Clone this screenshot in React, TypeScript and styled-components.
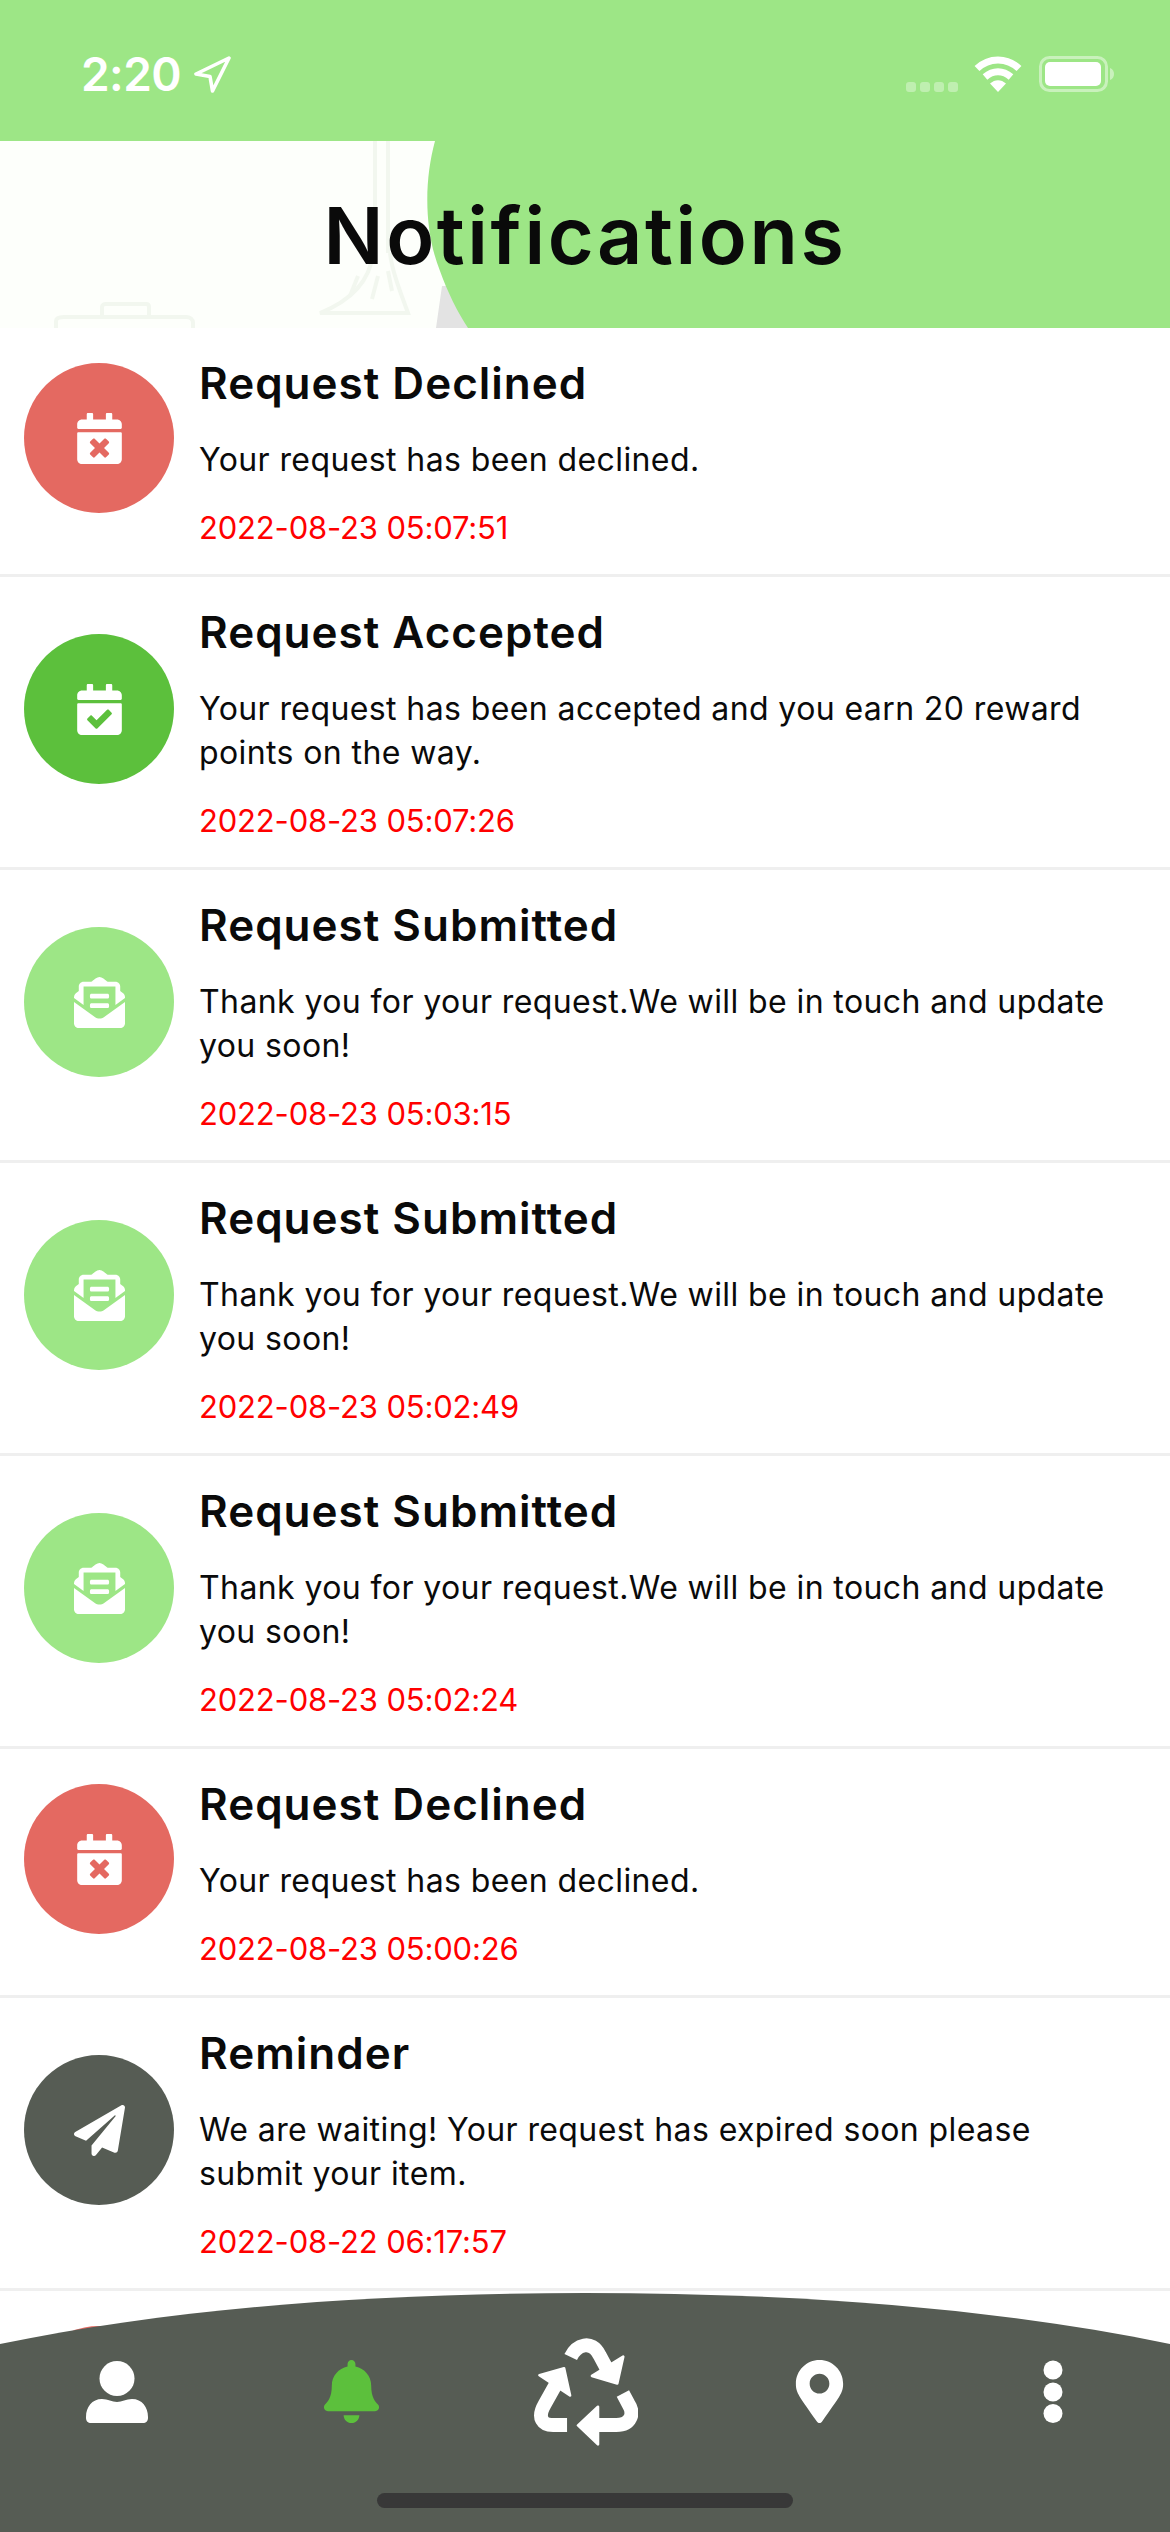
import React from "react";
import styled, { createGlobalStyle } from "styled-components";
import { FaCalendarCheck, FaCalendarTimes, FaEnvelopeOpenText, FaPaperPlane, FaBell, FaMapMarkerAlt } from "react-icons/fa";

const Global = createGlobalStyle`
  html, body { margin: 0; padding: 0; background: #fff; }
  * { box-sizing: border-box; }
`;

const GREEN = "#9de686";
const DARK = "#565c54";

const Page = styled.div`
  position: relative;
  width: 1170px;
  height: 2532px;
  overflow: hidden;
  background: #fff;
  font-family: Inter, "Noto Sans", sans-serif;
  color: #0a0a0a;
`;

const StatusBar = styled.div`
  height: 141px;
  background: ${GREEN};
  display: flex;
  justify-content: space-between;
  align-items: flex-start;
  padding: 56px 55px 0 81px;
`;
const TimeGroup = styled.div`
  display: flex;
  align-items: flex-start;
  gap: 13px;
`;
const Time = styled.span`
  font-size: 46px;
  line-height: 37px;
  font-weight: 600;
  color: #fff;
  letter-spacing: -0.6px;
`;
const StatusIcons = styled.div`
  display: flex;
  align-items: flex-start;
  gap: 16px;
`;

const Header = styled.header`
  position: relative;
  height: 187px;
  background: #fdfffb;
  display: flex;
  align-items: center;
  justify-content: center;
`;
const HeaderArt = styled.svg`
  position: absolute;
  inset: 0;
  width: 100%;
  height: 100%;
`;
const Title = styled.h1`
  position: relative;
  margin: 0;
  font-size: 79px;
  line-height: 96px;
  font-weight: 600;
  letter-spacing: 2.6px;
`;

const List = styled.div`
  display: flex;
  flex-direction: column;
`;
const Row = styled.article`
  display: flex;
  align-items: center;
  gap: 25px;
  padding: 22px 0 24px 24px;
  border-bottom: 3px solid #efefef;
`;
const Badge = styled.div<{ $bg: string }>`
  flex: none;
  width: 150px;
  height: 150px;
  margin-bottom: 24px;
  border-radius: 50%;
  background: ${(p) => p.$bg};
  color: #fff;
  display: flex;
  align-items: center;
  justify-content: center;
`;
const Content = styled.div`
  width: 930px;
`;
const ItemTitle = styled.h2`
  margin: 0;
  font-size: 44px;
  line-height: 66px;
  font-weight: 600;
  letter-spacing: 1px;
`;
const Body = styled.p`
  margin: 22px 0 0;
  font-size: 32px;
  line-height: 44px;
  font-weight: 400;
  letter-spacing: 0.4px;
`;
const Stamp = styled.div`
  margin-top: 24px;
  font-size: 31px;
  line-height: 44px;
  color: #ff0000;
  letter-spacing: -0.17px;
`;

const Nav = styled.nav`
  position: absolute;
  left: 0;
  right: 0;
  bottom: 0;
  height: 239px;
  background: ${DARK};
  clip-path: path("M0 51 C180 14 380 0 585 0 C790 0 990 14 1170 51 L1170 239 L0 239 Z");
  padding-top: 44px;
  display: flex;
  flex-direction: column;
  align-items: center;
`;
const NavIcons = styled.div`
  width: 100%;
  height: 109px;
  display: grid;
  grid-template-columns: repeat(5, 1fr);
`;
const NavItem = styled.div<{ $color?: string }>`
  display: flex;
  align-items: center;
  justify-content: center;
  color: ${(p) => p.$color || "#fff"};
`;
const HomeBar = styled.div`
  margin-top: 47px;
  width: 416px;
  height: 15px;
  border-radius: 8px;
  background: #383838;
`;

const Recycle = () => (
  <svg width="105" height="109" viewBox="155 80 315 328">
    <g fill="none" stroke="#fff" strokeWidth="42" strokeLinejoin="round">
      <path d="M268 140 C285 105 330 85 355 135 L378 178" />
      <path d="M222 225 L190 282 C165 325 185 345 215 345 L257 345" />
      <path d="M345 345 L405 345 C450 345 460 310 442 282 L425 250" />
    </g>
    <g fill="#fff" stroke="#fff" strokeWidth="8" strokeLinejoin="round">
      <path d="M426 139 L408 220 L332 197 Z" />
      <path d="M174 195 L248 174 L266 256 Z" />
      <path d="M350 290 L290 346 L350 403 Z" />
    </g>
  </svg>
);

const Person = () => (
  <svg width="62" height="62" viewBox="0 0 62 62" fill="#fff">
    <circle cx="31" cy="17.5" r="17.5" />
    <path d="M0 56 C0 46 6 38 16 38 C22 38 26 41 31 41 C36 41 40 38 46 38 C56 38 62 46 62 56 V57 C62 60 60 62 57 62 H5 C2 62 0 60 0 57 Z" />
  </svg>
);

type Item = { kind: "no" | "yes" | "sent" | "remind"; title: string; body: string; stamp: string };
const decl = "Your request has been declined.";
const thanks = "Thank you for your request.We will be in touch and update you soon!";
const items: Item[] = [
  { kind: "no", title: "Request Declined", body: decl, stamp: "2022-08-23 05:07:51" },
  { kind: "yes", title: "Request Accepted", body: "Your request has been accepted and you earn 20 reward points on the way.", stamp: "2022-08-23 05:07:26" },
  { kind: "sent", title: "Request Submitted", body: thanks, stamp: "2022-08-23 05:03:15" },
  { kind: "sent", title: "Request Submitted", body: thanks, stamp: "2022-08-23 05:02:49" },
  { kind: "sent", title: "Request Submitted", body: thanks, stamp: "2022-08-23 05:02:24" },
  { kind: "no", title: "Request Declined", body: decl, stamp: "2022-08-23 05:00:26" },
  { kind: "remind", title: "Reminder", body: "We are waiting! Your request has expired soon please submit your item.", stamp: "2022-08-22 06:17:57" },
  { kind: "no", title: "Request Declined", body: decl, stamp: "2022-08-22 06:10:12" },
];
const looks = {
  no: { bg: "#e46961", icon: <FaCalendarTimes size={51} /> },
  yes: { bg: "#5cc03c", icon: <FaCalendarCheck size={51} /> },
  sent: { bg: GREEN, icon: <FaEnvelopeOpenText size={51} /> },
  remind: { bg: DARK, icon: <FaPaperPlane size={51} /> },
};

export default function App() {
  return (
    <Page>
      <Global />
      <StatusBar>
        <TimeGroup>
          <Time>2:20</Time>
          <svg width="37" height="37" viewBox="0 0 37 37" fill="none">
            <path d="M35 2 L2 18 L16 20.5 L18.5 35 Z" stroke="#fff" strokeWidth="3.6" strokeLinejoin="round" />
          </svg>
        </TimeGroup>
        <StatusIcons>
          <svg width="52" height="36" viewBox="0 0 52 36" fill="#fff" fillOpacity="0.35">
            <rect x="0" y="26" width="10" height="10" rx="3" />
            <rect x="14" y="26" width="10" height="10" rx="3" />
            <rect x="28" y="26" width="10" height="10" rx="3" />
            <rect x="42" y="26" width="10" height="10" rx="3" />
          </svg>
          <svg width="48" height="36" viewBox="0 0 48 36">
            <g fill="none" stroke="#fff" strokeWidth="7">
              <path d="M3 12.5 C15 1 33 1 45 12.5" />
              <path d="M11 21 C19 14 29 14 37 21" />
            </g>
            <path d="M16 27.5 C21 23 27 23 32 27.5 L24 36 Z" fill="#fff" />
          </svg>
          <svg width="76" height="36" viewBox="0 0 76 36" style={{ marginLeft: 1 }}>
            <rect x="1.5" y="1.5" width="66" height="33" rx="9" fill="none" stroke="#fff" strokeOpacity="0.45" strokeWidth="3" />
            <rect x="6" y="6" width="56" height="24" rx="5" fill="#fff" />
            <path d="M71 12 C74 13 75 15.5 75 18 C75 20.5 74 23 71 24 Z" fill="#fff" fillOpacity="0.45" />
          </svg>
        </StatusIcons>
      </StatusBar>

      <Header>
        <HeaderArt viewBox="0 0 1170 187">
          <g fill="none" stroke="#f2f7ef" strokeWidth="4">
            <path d="M375 0 V112 M388 0 V112" />
            <path d="M373 112 C370 140 350 160 320 172 H408 C400 150 392 130 390 112" />
            <path d="M350 155 L358 135 M372 158 L378 135 M392 150 L388 130" />
            <path d="M56 187 V180 C56 177 60 176 64 176 H186 C190 176 193 178 193 182 V187" />
            <path d="M102 176 V166 C102 164 104 163 106 163 H146 C148 163 149 164 149 166 V176" />
          </g>
          <path d="M442 145 L436 187 L470 187 L450 145 Z" fill="#e3e3e3" />
          <path d="M435 0 C424 40 424 90 440 130 C447 150 458 172 468 187 L1170 187 L1170 0 Z" fill={GREEN} />
        </HeaderArt>
        <Title>Notifications</Title>
      </Header>

      <List>
        {items.map((it, i) => (
          <Row key={i}>
            <Badge $bg={looks[it.kind].bg}>{looks[it.kind].icon}</Badge>
            <Content>
              <ItemTitle>{it.title}</ItemTitle>
              <Body>{it.body}</Body>
              <Stamp>{it.stamp}</Stamp>
            </Content>
          </Row>
        ))}
      </List>

      <Nav>
        <NavIcons>
          <NavItem><Person /></NavItem>
          <NavItem $color="#5cc03c"><FaBell size={63} /></NavItem>
          <NavItem><Recycle /></NavItem>
          <NavItem><FaMapMarkerAlt size={63} /></NavItem>
          <NavItem>
            <svg width="20" height="63" viewBox="0 0 20 63" fill="#fff">
              <circle cx="10" cy="10" r="9.5" />
              <circle cx="10" cy="32" r="9.5" />
              <circle cx="10" cy="53.5" r="9.5" />
            </svg>
          </NavItem>
        </NavIcons>
        <HomeBar />
      </Nav>
    </Page>
  );
}
